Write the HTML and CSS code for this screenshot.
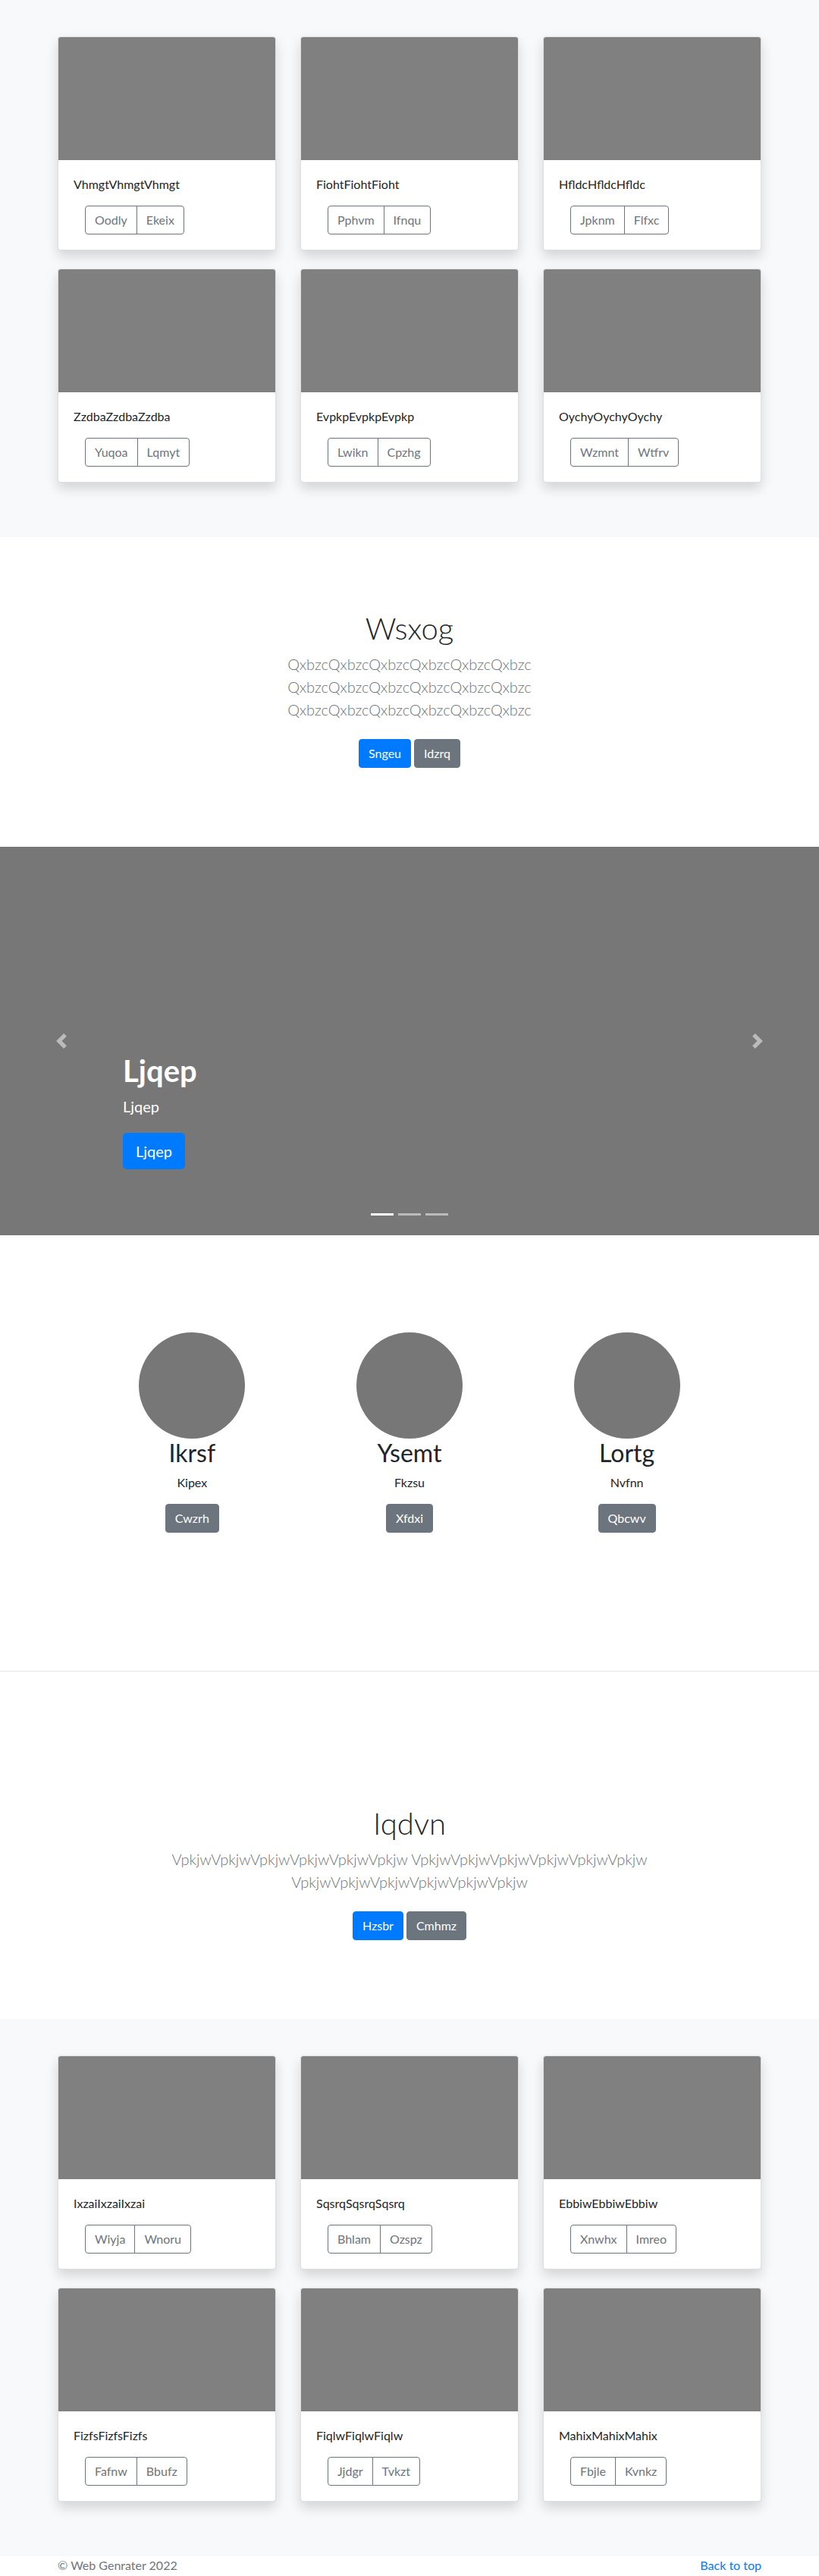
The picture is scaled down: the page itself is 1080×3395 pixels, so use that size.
FILE: index.html
```html
<!DOCTYPE html>
<html lang="en">
<head>
<meta charset="utf-8">
<title>Album</title>
<link rel="stylesheet" href="styles.css">
</head>
<body>
<main>
  <section class="album">
    <div class="container card-grid">
      <div class="card"><div class="card-img"></div><div class="card-body"><p class="card-text">VhmgtVhmgtVhmgt</p><div class="btn-row"><div class="btn-group"><button class="btn btn-outline">Oodly</button><button class="btn btn-outline">Ekeix</button></div></div></div></div>
      <div class="card"><div class="card-img"></div><div class="card-body"><p class="card-text">FiohtFiohtFioht</p><div class="btn-row"><div class="btn-group"><button class="btn btn-outline">Pphvm</button><button class="btn btn-outline">Ifnqu</button></div></div></div></div>
      <div class="card"><div class="card-img"></div><div class="card-body"><p class="card-text">HfldcHfldcHfldc</p><div class="btn-row"><div class="btn-group"><button class="btn btn-outline">Jpknm</button><button class="btn btn-outline">Flfxc</button></div></div></div></div>
      <div class="card"><div class="card-img"></div><div class="card-body"><p class="card-text">ZzdbaZzdbaZzdba</p><div class="btn-row"><div class="btn-group"><button class="btn btn-outline">Yuqoa</button><button class="btn btn-outline">Lqmyt</button></div></div></div></div>
      <div class="card"><div class="card-img"></div><div class="card-body"><p class="card-text">EvpkpEvpkpEvpkp</p><div class="btn-row"><div class="btn-group"><button class="btn btn-outline">Lwikn</button><button class="btn btn-outline">Cpzhg</button></div></div></div></div>
      <div class="card"><div class="card-img"></div><div class="card-body"><p class="card-text">OychyOychyOychy</p><div class="btn-row"><div class="btn-group"><button class="btn btn-outline">Wzmnt</button><button class="btn btn-outline">Wtfrv</button></div></div></div></div>
    </div>
  </section>

  <section class="jumbotron">
    <div class="jumbo-inner">
      <h1 class="jumbo-heading">Wsxog</h1>
      <p class="lead">QxbzcQxbzcQxbzcQxbzcQxbzcQxbzc QxbzcQxbzcQxbzcQxbzcQxbzcQxbzc QxbzcQxbzcQxbzcQxbzcQxbzcQxbzc</p>
      <p class="jumbo-actions"><a class="btn btn-primary">Sngeu</a> <a class="btn btn-secondary">Idzrq</a></p>
    </div>
  </section>

  <section class="carousel">
    <div class="carousel-caption">
      <h1 class="caption-title">Ljqep</h1>
      <p class="caption-text">Ljqep</p>
      <a class="btn btn-lg btn-primary">Ljqep</a>
    </div>
    <a class="carousel-control prev" aria-label="Previous">
      <svg width="20" height="20" viewBox="0 0 8 8"><path fill="#fff" d="M5.25 0l-4 4 4 4 1.5-1.5L4.25 4l2.5-2.5L5.25 0z"/></svg>
    </a>
    <a class="carousel-control next" aria-label="Next">
      <svg width="20" height="20" viewBox="0 0 8 8"><path fill="#fff" d="M2.75 0l-1.5 1.5L3.75 4l-2.5 2.5L2.75 8l4-4-4-4z"/></svg>
    </a>
    <ol class="indicators">
      <li class="active"></li>
      <li></li>
      <li></li>
    </ol>
  </section>

  <section class="marketing">
    <div class="marketing-row">
      <div class="feature"><div class="avatar"></div><h2 class="feature-title">Ikrsf</h2><p class="feature-text">Kipex</p><a class="btn btn-secondary">Cwzrh</a></div>
      <div class="feature"><div class="avatar"></div><h2 class="feature-title">Ysemt</h2><p class="feature-text">Fkzsu</p><a class="btn btn-secondary">Xfdxi</a></div>
      <div class="feature"><div class="avatar"></div><h2 class="feature-title">Lortg</h2><p class="feature-text">Nvfnn</p><a class="btn btn-secondary">Qbcwv</a></div>
    </div>
  </section>

  <hr class="divider">

  <section class="jumbotron">
    <div class="jumbo-inner">
      <h1 class="jumbo-heading">Iqdvn</h1>
      <p class="lead">VpkjwVpkjwVpkjwVpkjwVpkjwVpkjw VpkjwVpkjwVpkjwVpkjwVpkjwVpkjw VpkjwVpkjwVpkjwVpkjwVpkjwVpkjw</p>
      <p class="jumbo-actions"><a class="btn btn-primary">Hzsbr</a> <a class="btn btn-secondary">Cmhmz</a></p>
    </div>
  </section>

  <section class="album">
    <div class="container card-grid">
      <div class="card"><div class="card-img"></div><div class="card-body"><p class="card-text">IxzaiIxzaiIxzai</p><div class="btn-row"><div class="btn-group"><button class="btn btn-outline">Wiyja</button><button class="btn btn-outline">Wnoru</button></div></div></div></div>
      <div class="card"><div class="card-img"></div><div class="card-body"><p class="card-text">SqsrqSqsrqSqsrq</p><div class="btn-row"><div class="btn-group"><button class="btn btn-outline">Bhlam</button><button class="btn btn-outline">Ozspz</button></div></div></div></div>
      <div class="card"><div class="card-img"></div><div class="card-body"><p class="card-text">EbbiwEbbiwEbbiw</p><div class="btn-row"><div class="btn-group"><button class="btn btn-outline">Xnwhx</button><button class="btn btn-outline">Imreo</button></div></div></div></div>
      <div class="card"><div class="card-img"></div><div class="card-body"><p class="card-text">FizfsFizfsFizfs</p><div class="btn-row"><div class="btn-group"><button class="btn btn-outline">Fafnw</button><button class="btn btn-outline">Bbufz</button></div></div></div></div>
      <div class="card"><div class="card-img"></div><div class="card-body"><p class="card-text">FiqlwFiqlwFiqlw</p><div class="btn-row"><div class="btn-group"><button class="btn btn-outline">Jjdgr</button><button class="btn btn-outline">Tvkzt</button></div></div></div></div>
      <div class="card"><div class="card-img"></div><div class="card-body"><p class="card-text">MahixMahixMahix</p><div class="btn-row"><div class="btn-group"><button class="btn btn-outline">Fbjle</button><button class="btn btn-outline">Kvnkz</button></div></div></div></div>
    </div>
  </section>
</main>

<footer class="footer">
  <div class="container footer-inner">
    <p class="copyright">© Web Genrater 2022</p>
    <a class="back-top" href="#">Back to top</a>
  </div>
</footer>
</body>
</html>
```

FILE: styles.css
```css
* { box-sizing: border-box; }

html, body {
  margin: 0;
  padding: 0;
}

body {
  font-family: Lato, "Open Sans", sans-serif;
  font-size: 16px;
  line-height: 24px;
  color: #212529;
  background: #fff;
}

p { margin: 0; }
h1, h2 { margin: 0; }

.container {
  width: 960px;
  margin: 0 auto;
  padding: 0 16px;
}

/* Buttons */
.btn {
  display: inline-block;
  font-family: inherit;
  font-size: 16px;
  line-height: 24px;
  font-weight: 400;
  padding: 6px 12px;
  border: 1px solid transparent;
  border-radius: 4px;
  text-decoration: none;
  background: transparent;
  cursor: pointer;
  vertical-align: middle;
}

.btn-primary { background: #007bff; border-color: #007bff; color: #fff; }
.btn-secondary { background: #6c757d; border-color: #6c757d; color: #fff; }
.btn-outline { color: #6c757d; border-color: #6c757d; background: transparent; }

.btn-lg {
  font-size: 20px;
  line-height: 30px;
  padding: 8px 16px;
  border-radius: 5px;
}

/* Album */
.album {
  background: #f8f9fa;
  padding: 48px 0 72px;
}

.card-grid {
  display: grid;
  grid-template-columns: repeat(3, 1fr);
  column-gap: 32px;
  row-gap: 24px;
}

.card {
  background: #fff;
  border: 1px solid rgba(0,0,0,.125);
  border-radius: 4px;
  box-shadow: 0 8px 16px rgba(0,0,0,.15);
  overflow: hidden;
}

.card-img {
  height: 162px;
  background: #808080;
}

.card-body {
  padding: 20px;
}

.card-text {
  margin-bottom: 16px;
}

.btn-row {
  display: flex;
  align-items: center;
  padding-left: 15px;
}

.btn-group {
  display: inline-flex;
}

.btn-group .btn {
  border-radius: 0;
}

.btn-group .btn:first-child {
  border-radius: 4px 0 0 4px;
}

.btn-group .btn:last-child {
  margin-left: -1px;
  border-radius: 0 4px 4px 0;
}

/* Jumbotron */
.jumbotron {
  background: #fff;
  padding: 96px 0;
  text-align: center;
}

.jumbo-inner {
  width: 670px;
  margin: 0 auto;
  padding: 0 15px;
}

.jumbo-heading {
  font-size: 40px;
  line-height: 48px;
  font-weight: 300;
  margin-bottom: 8px;
}

.lead {
  font-size: 20px;
  line-height: 30px;
  font-weight: 300;
  color: #6c757d;
  margin-bottom: 16px;
}

.jumbo-actions {
  padding: 8px 0;
  height: 54px;
  font-size: 0;
  display: flex;
  justify-content: center;
  gap: 4px;
}

/* Carousel */
.carousel {
  position: relative;
  height: 512px;
  background: #777;
  overflow: hidden;
}

.carousel-caption {
  position: absolute;
  left: 15%;
  right: 15%;
  bottom: 87px;
  color: #fff;
  text-align: left;
  display: flex;
  flex-direction: column;
  align-items: flex-start;
}

.caption-title {
  font-size: 40px;
  line-height: 48px;
  font-weight: 700;
  margin-bottom: 8px;
}

.caption-text {
  font-size: 20px;
  line-height: 30px;
  margin-bottom: 20px;
}

.carousel-control {
  position: absolute;
  top: 0;
  bottom: 0;
  width: 15%;
  display: flex;
  align-items: center;
  justify-content: center;
  opacity: .5;
}

.carousel-control.prev { left: 0; }
.carousel-control.next { right: 0; }

.carousel-control svg { display: block; }

.indicators {
  position: absolute;
  left: 0;
  right: 0;
  bottom: 16px;
  margin: 0;
  padding: 0;
  list-style: none;
  display: flex;
  justify-content: center;
}

.indicators li {
  width: 30px;
  height: 23px;
  margin: 0 3px;
  border-top: 10px solid transparent;
  border-bottom: 10px solid transparent;
  background: #fff;
  background-clip: padding-box;
  opacity: .5;
}

.indicators li.active { opacity: 1; }

/* Marketing */
.marketing {
  padding-top: 128px;
}

.marketing-row {
  width: 860px;
  margin: 0 auto;
  display: grid;
  grid-template-columns: repeat(3, 1fr);
}

.feature {
  display: flex;
  flex-direction: column;
  align-items: center;
  text-align: center;
}

.avatar {
  width: 140px;
  height: 140px;
  border-radius: 50%;
  background: #777;
}

.feature-title {
  font-size: 32px;
  line-height: 38.4px;
  font-weight: 400;
  margin-bottom: 8px;
}

.feature-text {
  margin-bottom: 16px;
}

.divider {
  margin: 182px 0 80px;
  border: 0;
  border-top: 1px solid rgba(0,0,0,.1);
  height: 0;
}

/* Footer */
.footer {
  color: #6c757d;
}

.footer-inner {
  display: flex;
  justify-content: space-between;
  align-items: center;
}

.back-top {
  color: #007bff;
  text-decoration: none;
}
```
